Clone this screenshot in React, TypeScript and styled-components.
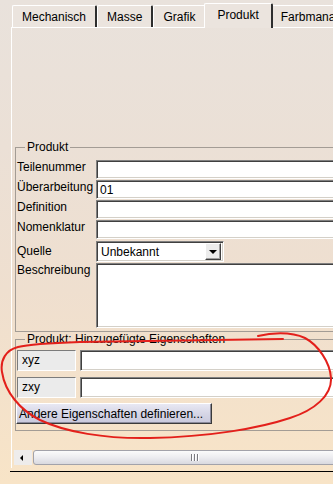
import React from 'react';
import styled, { createGlobalStyle } from 'styled-components';

const GlobalStyle = createGlobalStyle`
  html, body {
    margin: 0;
    padding: 0;
  }
  body {
    font-family: 'Liberation Sans', Arial, sans-serif;
    font-size: 12px;
    color: #000;
  }
`;

const Frame = styled.div`
  position: relative;
  width: 333px;
  height: 484px;
  overflow: hidden;
  display: flex;
  flex-direction: column;
  background: linear-gradient(180deg, #e9e2dc 0%, #ebe0d6 30%, #efdfcf 60%, #f8e4c7 100%);
`;

const TabBar = styled.div`
  display: flex;
  align-items: flex-end;
  height: 27px;
  padding-left: 12px;
  flex-shrink: 0;
`;

const Tab = styled.div<{ $active?: boolean }>`
  box-sizing: border-box;
  display: flex;
  align-items: center;
  flex-shrink: 0;
  white-space: nowrap;
  height: ${(p) => (p.$active ? 25 : 22)}px;
  margin: 0 ${(p) => (p.$active ? -2 : 0)}px ${(p) => (p.$active ? -1 : 0)}px;
  padding: 0 ${(p) => (p.$active ? 12 : 9)}px ${(p) => (p.$active ? 2 : 0)}px;
  z-index: ${(p) => (p.$active ? 2 : 1)};
  background: #ebe4de;
  border-top: 1px solid #fff;
  border-left: 1px solid #fff;
  border-right: 2px solid #2e2e2e;
  border-radius: 2px 2px 0 0;
`;

const Panel = styled.div`
  margin-left: 11px;
  border-left: 1px solid #fff;
  border-top: 1px solid #fff;
  padding: 112px 0 3px 2px;
  display: flex;
  flex-direction: column;
  align-items: flex-start;
`;

const GroupBox = styled.fieldset<{ $pad: number }>`
  box-sizing: border-box;
  margin: 0 0 0 1px;
  padding: 0 0 ${(p) => p.$pad}px 1px;
  width: 360px;
  min-width: 0;
  border: 1px solid #a39c95;
`;

const GroupTitle = styled.legend`
  margin-left: 8px;
  padding: 0 2px;
  font-size: 12px;
  line-height: 14px;
`;

const FieldGrid = styled.div`
  display: grid;
  grid-template-columns: 79px 1fr;
  row-gap: 1px;
  margin-top: 6px;
`;

const FieldLabel = styled.div<{ $center?: boolean }>`
  line-height: 14px;
  white-space: nowrap;
  align-self: ${(p) => (p.$center ? 'center' : 'start')};
`;

const sunken = `
  border: 1px solid;
  border-color: #808080 #fff #fff #808080;
  box-shadow: inset 1px 1px 0 #404040, inset -1px -1px 0 #d4d0c8;
`;

const TextInput = styled.input<{ $h?: number }>`
  box-sizing: border-box;
  display: block;
  width: 260px;
  height: ${(p) => p.$h ?? 19}px;
  margin: 0;
  padding: 0 2px 0 3px;
  font-family: 'Liberation Sans', Arial, sans-serif;
  font-size: 12px;
  color: #000;
  background: #fff;
  outline: none;
  ${sunken}
`;

const TextArea = styled.textarea`
  box-sizing: border-box;
  display: block;
  width: 260px;
  height: 65px;
  margin: 0;
  padding: 2px 3px;
  resize: none;
  font-family: 'Liberation Sans', Arial, sans-serif;
  font-size: 12px;
  background: #fff;
  outline: none;
  ${sunken}
`;

const Combo = styled.div`
  box-sizing: border-box;
  display: flex;
  align-items: center;
  width: 128px;
  height: 21px;
  margin-top: 1px;
  padding: 2px 2px 2px 4px;
  background: #fff;
  ${sunken}
`;

const ComboText = styled.span`
  flex: 1;
  line-height: 14px;
`;

const ComboButton = styled.span`
  box-sizing: border-box;
  display: flex;
  align-items: center;
  justify-content: center;
  width: 16px;
  height: 17px;
  background: #ececec;
  border: 1px solid;
  border-color: #fff #404040 #404040 #fff;
  box-shadow: inset -1px -1px 0 #a0a0a0;

  &::after {
    content: '';
    border-left: 4px solid transparent;
    border-right: 4px solid transparent;
    border-top: 4px solid #000;
    margin-top: 1px;
  }
`;

const PropGrid = styled.div`
  display: grid;
  grid-template-columns: 59px 1fr;
  column-gap: 4px;
  row-gap: 6px;
  margin-top: 4px;
`;

const PropName = styled.div`
  box-sizing: border-box;
  height: 21px;
  padding: 0 4px;
  line-height: 19px;
  background: #ebebeb;
  border: 1px solid;
  border-color: #7c7c7c #fff #fff #7c7c7c;
`;

const DefineButton = styled.button`
  box-sizing: border-box;
  display: block;
  width: 196px;
  height: 21px;
  margin: 5px 0 0 -1px;
  padding: 0 0 0 2px;
  text-align: left;
  font-family: 'Liberation Sans', Arial, sans-serif;
  font-size: 12px;
  color: #000;
  background: linear-gradient(180deg, #e8e8f3 0%, #d6d6e6 50%, #c9c9dc 100%);
  border: 1px solid;
  border-color: #fff #3a3a3a #3a3a3a #fff;
  box-shadow: inset -1px -1px 0 #8a8a9a;
`;

const ScrollBar = styled.div`
  display: flex;
  height: 15px;
  width: 340px;
  margin: 19px 0 0 0;
`;

const ScrollArrow = styled.div`
  width: 18px;
  flex-shrink: 0;
  display: flex;
  align-items: center;
  justify-content: center;
  background: #eeeceb;

  &::after {
    content: '';
    border-top: 3px solid transparent;
    border-bottom: 3px solid transparent;
    border-right: 3px solid #000;
    margin-right: 3px;
  }
`;

const ScrollThumb = styled.div`
  box-sizing: border-box;
  width: 322px;
  margin-left: 1px;
  flex-shrink: 0;
  display: flex;
  align-items: center;
  justify-content: center;
  gap: 2px;
  border: 1px solid #a2a2aa;
  border-radius: 3px;
  background: linear-gradient(180deg, #fbfbfb 0%, #ececf0 50%, #d9d9df 100%);
`;

const Grip = styled.span`
  width: 1px;
  height: 7px;
  background: #7a7a80;
  box-shadow: 1px 0 0 #fff;
`;

const BottomRule = styled.div`
  height: 1px;
  margin: 3px 0 0 10px;
  background: #000;
`;

const Annotation = styled.svg`
  position: absolute;
  left: 0;
  top: 0;
  pointer-events: none;
`;

const tabs = ['Mechanisch', 'Masse', 'Grafik', 'Produkt', 'Farbmanagement'];

const fields: { label: string; value?: string }[] = [
  { label: 'Teilenummer' },
  { label: 'Überarbeitung', value: '01' },
  { label: 'Definition' },
  { label: 'Nomenklatur' },
];

const props = ['xyz', 'zxy'];

export default function App() {
  return (
    <Frame>
      <GlobalStyle />
      <TabBar>
        {tabs.map((t) => (
          <Tab key={t} $active={t === 'Produkt'}>
            {t}
          </Tab>
        ))}
      </TabBar>

      <Panel>
        <GroupBox $pad={3}>
          <GroupTitle>Produkt</GroupTitle>
          <FieldGrid>
            {fields.map((f) => (
              <React.Fragment key={f.label}>
                <FieldLabel>{f.label}</FieldLabel>
                <TextInput readOnly defaultValue={f.value ?? ''} />
              </React.Fragment>
            ))}
            <FieldLabel $center>Quelle</FieldLabel>
            <Combo>
              <ComboText>Unbekannt</ComboText>
              <ComboButton />
            </Combo>
            <FieldLabel>Beschreibung</FieldLabel>
            <TextArea readOnly defaultValue="" />
          </FieldGrid>
        </GroupBox>

        <GroupBox $pad={6}>
          <GroupTitle>Produkt: Hinzugefügte Eigenschaften</GroupTitle>
          <PropGrid>
            {props.map((p) => (
              <React.Fragment key={p}>
                <PropName>{p}</PropName>
                <TextInput readOnly defaultValue="" $h={21} />
              </React.Fragment>
            ))}
          </PropGrid>
          <DefineButton>Andere Eigenschaften definieren...</DefineButton>
        </GroupBox>

        <ScrollBar>
          <ScrollArrow />
          <ScrollThumb>
            <Grip />
            <Grip />
            <Grip />
          </ScrollThumb>
        </ScrollBar>
      </Panel>
      <BottomRule />

      {/* hand-drawn red marker around the added properties */}
      <Annotation width={333} height={484} viewBox="0 0 333 484">
        <path
          d="M258 336 C270 333, 290 331, 305 338 C318 345, 330 362, 331 378 C332 395, 315 410, 290 418 C260 428, 210 437, 150 438 C105 439, 65 432, 40 420 C20 410, 5 392, 2 372 C0 360, 6 350, 18 347 C30 344, 50 343, 80 342 L283 339"
          fill="none"
          stroke="#e3201b"
          strokeWidth={2}
          strokeLinecap="round"
          strokeLinejoin="round"
        />
      </Annotation>
    </Frame>
  );
}
